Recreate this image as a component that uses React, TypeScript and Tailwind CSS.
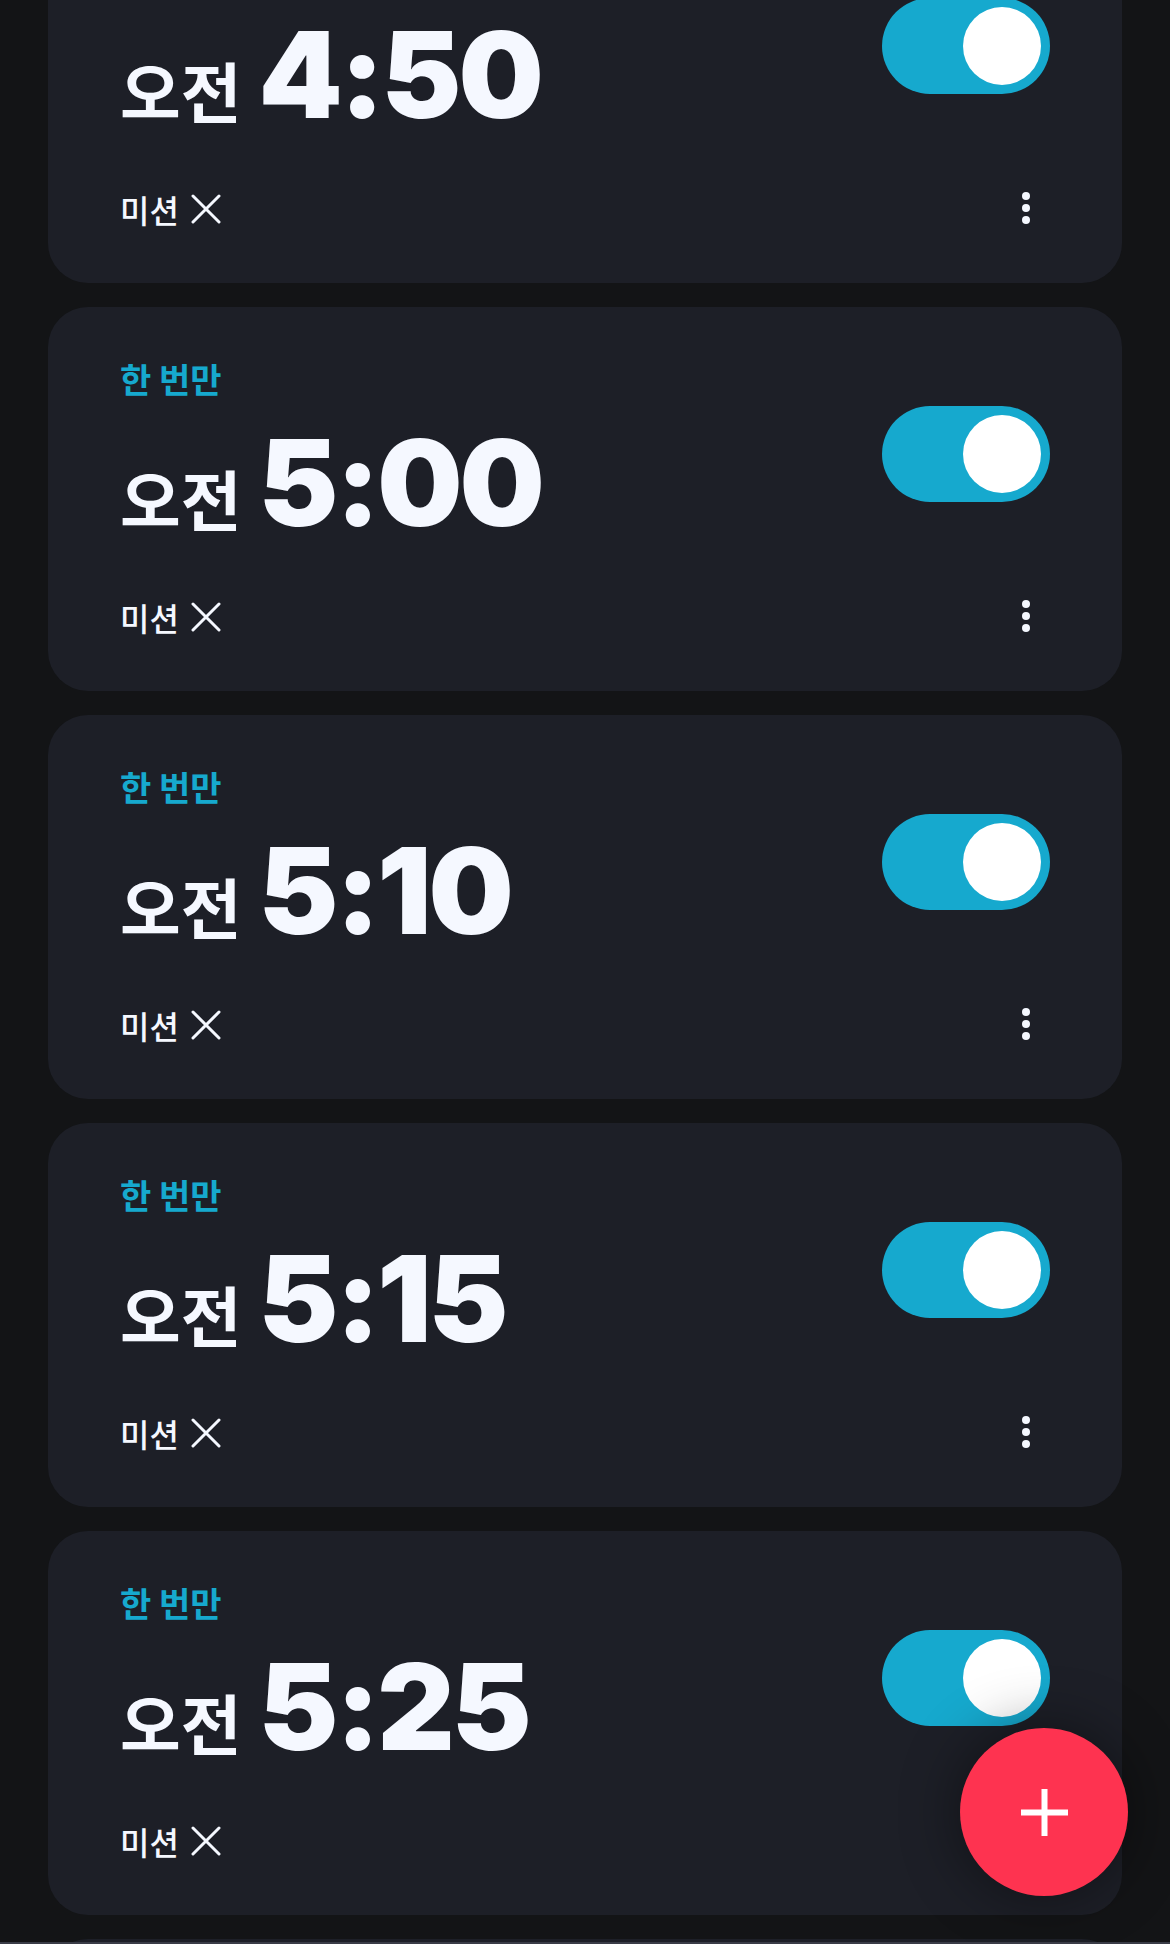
type Alarm = {
  id: number;
  ampm: string;
  time: string;
  repeat: string;
  mission: string;
  on: boolean;
};

const alarms: Alarm[] = [
  { id: 1, ampm: "오전", time: "4:50", repeat: "한 번만", mission: "미션", on: true },
  { id: 2, ampm: "오전", time: "5:00", repeat: "한 번만", mission: "미션", on: true },
  { id: 3, ampm: "오전", time: "5:10", repeat: "한 번만", mission: "미션", on: true },
  { id: 4, ampm: "오전", time: "5:15", repeat: "한 번만", mission: "미션", on: true },
  { id: 5, ampm: "오전", time: "5:25", repeat: "한 번만", mission: "미션", on: true },
  { id: 6, ampm: "오전", time: "5:30", repeat: "한 번만", mission: "미션", on: true },
];

const korean = "font-['Noto_Sans_CJK_KR','Noto_Sans',sans-serif]";

// thin x mark next to the mission label
const XMark = () => (
  <svg width="30" height="30" viewBox="0 0 30 30" fill="none">
    <path
      d="M2 2L28 28M28 2L2 28"
      stroke="#f5f8ff"
      strokeWidth="3"
      strokeLinecap="round"
    />
  </svg>
);

const Toggle = ({ on }: { on: boolean }) => (
  <div
    className={`w-[168px] h-[96px] rounded-full p-[9px] flex ${
      on ? "bg-[#16a9ce] justify-end" : "bg-[#3a3d46] justify-start"
    }`}
  >
    <div className="w-[78px] h-[78px] rounded-full bg-white" />
  </div>
);

const AlarmCard = ({ alarm }: { alarm: Alarm }) => {
  return (
    <div className="h-[384px] shrink-0 rounded-[40px] bg-[#1d1f27] px-[72px] pt-[52px] flex justify-between">
      <div className="flex flex-col">
        <p
          className={`${korean} h-[40px] leading-[40px] text-[34px] font-bold text-[#16a9ce]`}
        >
          {alarm.repeat}
        </p>

        <div className="mt-[24px] h-[120px] flex items-baseline text-[#f5f8ff]">
          <span className={`${korean} text-[66px] leading-none font-semibold`}>
            {alarm.ampm}
          </span>
          <span className="ml-[17px] font-['Inter',sans-serif] text-[120px] leading-none font-black tracking-[-3px]">
            {alarm.time}
          </span>
        </div>

        <div className="mt-[54px] h-[40px] flex items-center gap-[12px] text-[#f5f8ff]">
          <span className={`${korean} text-[32px] leading-[40px] font-medium`}>
            {alarm.mission}
          </span>
          <XMark />
        </div>
      </div>

      <div className="flex flex-col items-end">
        <div className="mt-[47px]">
          <Toggle on={alarm.on} />
        </div>
        <div className="mt-[98px] mr-[20px] w-[8px] h-[32px] flex flex-col justify-between items-center">
          <span className="w-[8px] h-[8px] rounded-full bg-[#f5f8ff]" />
          <span className="w-[8px] h-[8px] rounded-full bg-[#f5f8ff]" />
          <span className="w-[8px] h-[8px] rounded-full bg-[#f5f8ff]" />
        </div>
      </div>
    </div>
  );
};

export default function App() {
  return (
    <div className="relative w-[1170px] h-[1944px] overflow-hidden bg-[#131416]">
      <div className="-mt-[101px] px-12 flex flex-col gap-6">
        {alarms.map((a) => (
          <AlarmCard key={a.id} alarm={a} />
        ))}
      </div>

      {/* add alarm button */}
      <button className="absolute right-[42px] bottom-[48px] w-[168px] h-[168px] rounded-full bg-[#fe3350] flex items-center justify-center shadow-[0_0_60px_rgba(0,0,0,0.45)]">
        <svg width="47" height="47" viewBox="0 0 47 47">
          <path d="M23.5 0V47M0 23.5H47" stroke="white" strokeWidth="6" />
        </svg>
      </button>

      <div className="absolute bottom-0 left-0 w-full h-[2px] bg-[#3a3c47]" />
    </div>
  );
}
